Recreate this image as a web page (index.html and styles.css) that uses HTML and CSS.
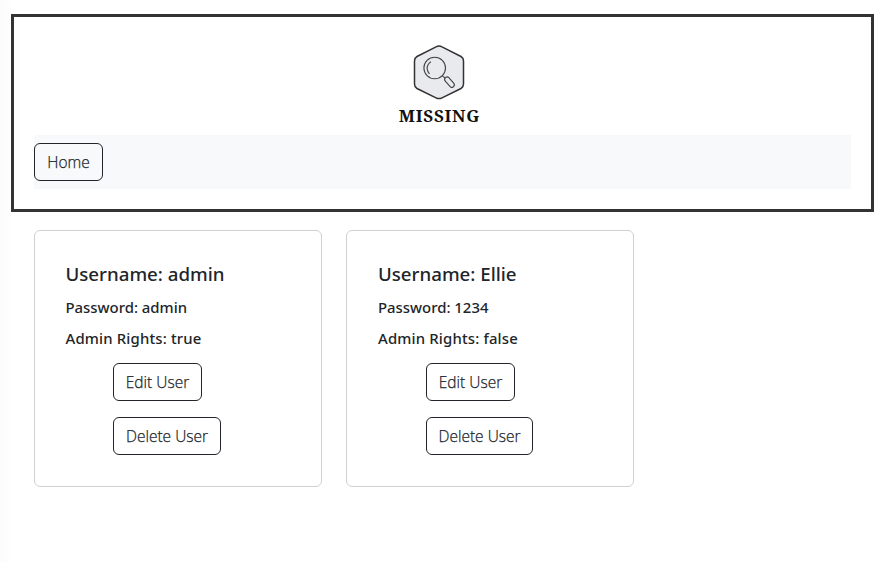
FILE: index.html
```html
<!DOCTYPE html>
<html lang="en">
<head>
<meta charset="utf-8">
<title>Missing</title>
<link rel="stylesheet" href="styles.css">
</head>
<body>
<header class="header">
  <svg class="logo" width="100" height="90" viewBox="0 0 100 90">
    <path d="M46 11.900Q49 10.300 52 11.900L71 21.500Q73.500 23 73.500 26V49Q73.500 52 71 53.500L52 62.800Q49 64.400 46 62.800L27 53.500Q24.500 52 24.500 49V26Q24.500 23 27 21.500Z" fill="#e9eaee" stroke="#333" stroke-width="1.5"/>
    <g fill="none" stroke="#444" stroke-width="1.1">
      <circle cx="44.700" cy="33" r="10.800"/>
      <path d="M39.500 39Q35.500 34 38.200 29.500Q39.300 27.600 41 26.800M52.500 40.800L55 43"/>
      <rect x="53.500" y="44.700" width="12" height="5" rx="2.500" transform="rotate(49 59.500 47.200)"/>
    </g>
    <text class="logo-text" x="8.800" y="86.500" textLength="80.500">MISSING</text>
  </svg>
  <nav class="nav"><a class="btn home">Home</a></nav>
</header>
<main class="cards">
  <section class="card admin">
    <h5>Username: admin</h5>
    <h6>Password: admin</h6>
    <h6 class="rights">Admin Rights: true</h6>
    <div class="actions"><a class="btn edit">Edit User</a><a class="btn delete">Delete User</a></div>
  </section>
  <section class="card">
    <h5>Username: Ellie</h5>
    <h6>Password: 1234</h6>
    <h6 class="rights">Admin Rights: false</h6>
    <div class="actions"><a class="btn edit">Edit User</a><a class="btn delete narrow">Delete User</a></div>
  </section>
</main>
</body>
</html>
```
FILE: styles.css
```css
* { box-sizing: border-box; }
body {
  margin: 0;
  min-height: 562px;
  padding: 14px 7px 0 11px;
  background: linear-gradient(to right, #fbfbfb, #fff 14px);
  color: #212529;
  font-family: "Open Sans", "Noto Sans", sans-serif;
  font-size: 16px;
}
.header {
  height: 198px;
  padding: 18px 20px 20px;
  border: 3px solid #333;
  background: #fff;
}
.logo { display: block; margin: 0 auto 10px 355.500px; }
.logo-text {
  font: bold 17px "Noto Serif", "Liberation Serif", serif;
  fill: #111;
}
.nav {
  display: flex;
  height: 54px;
  padding: 8px 0;
  background: #f8f9fb;
}
.btn {
  display: flex;
  align-items: center;
  justify-content: center;
  height: 38px;
  border: 1px solid #212529;
  border-radius: 6px;
  font-size: 15.500px;
  font-weight: 300;
  -webkit-text-stroke: 0.25px #212529;
  white-space: nowrap;
}
.home { width: 69px; }
.edit { width: 89px; }
.delete { width: 108px; }
.narrow { width: 107px; }
.cards {
  display: flex;
  gap: 24px;
  padding: 18px 0 0 23px;
}
.card {
  width: 288px;
  height: 257px;
  padding: 31px 31px 0;
  border: 1px solid #d0d0d0;
  border-radius: 6px;
  background: #fff;
}
.admin { padding-left: 30.500px; }
.admin .actions { padding-left: 47.500px; }
h5, h6 {
  margin: 0;
  font-family: "Noto Sans", "Open Sans", sans-serif;
  font-weight: 500;
  white-space: nowrap;
}
h5 { margin-bottom: 12px; font-size: 18.700px; line-height: 24px; }
h6 { margin-bottom: 12px; font-size: 14.900px; line-height: 19px; }
.rights { letter-spacing: 0.160px; }
.actions {
  display: flex;
  flex-direction: column;
  gap: 16px;
  padding: 3px 0 0 48px;
}
```
